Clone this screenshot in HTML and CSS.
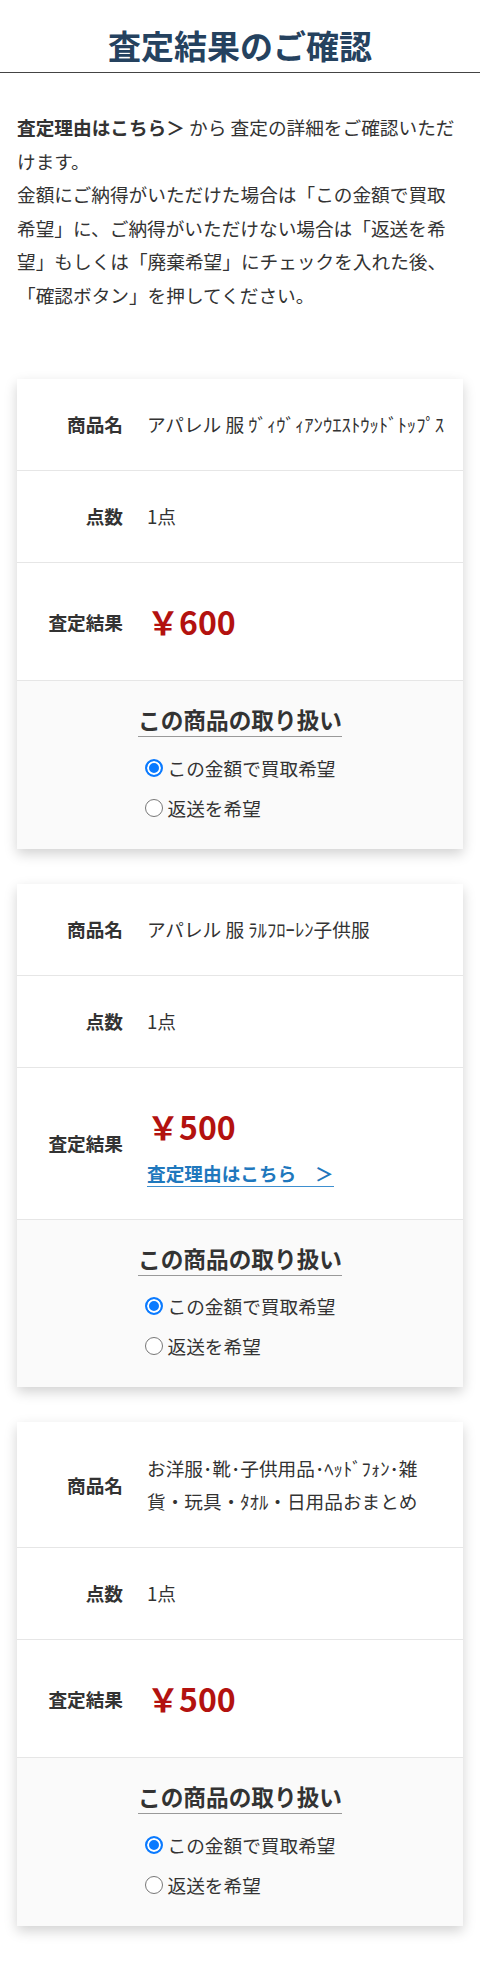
FILE: index.html
```html
<!DOCTYPE html>
<html lang="ja">
<head>
  <meta charset="UTF-8" />
  <title>査定結果のご確認</title>
  <link rel="stylesheet" href="styles.css">
</head>
<body>

  <header>
    <h1>査定結果のご確認</h1>
  </header>

  <main>
    <p class="intro">
      <b>査定理由はこちら＞</b> から 査定の詳細をご確認いただけます。<br>
      金額にご納得がいただけた場合は「この金額で買取希望」に、ご納得がいただけない場合は「返送を希望」もしくは「廃棄希望」にチェックを入れた後、「確認ボタン」を押してください。
    </p>

    <div class="card">
      <div class="row">
        <div class="label">商品名</div>
        <div class="value">アパレル 服 ｳﾞｨｳﾞｨｱﾝｳｴｽﾄｳｯﾄﾞﾄｯﾌﾟｽ</div>
      </div>
      <div class="row">
        <div class="label">点数</div>
        <div class="value">1点</div>
      </div>
      <div class="row">
        <div class="label">査定結果</div>
        <div class="value">
          <div class="price">￥600</div>
        </div>
      </div>
      <div class="handling">
        <h2>この商品の取り扱い</h2>
        <div class="options">
          <label><input type="radio" name="item1" checked>この金額で買取希望</label>
          <label><input type="radio" name="item1">返送を希望</label>
        </div>
      </div>
    </div>

    <div class="card">
      <div class="row">
        <div class="label">商品名</div>
        <div class="value">アパレル 服 ﾗﾙﾌﾛｰﾚﾝ子供服</div>
      </div>
      <div class="row">
        <div class="label">点数</div>
        <div class="value">1点</div>
      </div>
      <div class="row">
        <div class="label">査定結果</div>
        <div class="value">
          <div class="price">￥500</div>
          <div><a class="reason" href="#">査定理由はこちら　＞</a></div>
        </div>
      </div>
      <div class="handling">
        <h2>この商品の取り扱い</h2>
        <div class="options">
          <label><input type="radio" name="item2" checked>この金額で買取希望</label>
          <label><input type="radio" name="item2">返送を希望</label>
        </div>
      </div>
    </div>

    <div class="card">
      <div class="row">
        <div class="label">商品名</div>
        <div class="value">お洋服･靴･子供用品･ﾍｯﾄﾞﾌｫﾝ･雑貨・玩具・ﾀｵﾙ・日用品おまとめ</div>
      </div>
      <div class="row">
        <div class="label">点数</div>
        <div class="value">1点</div>
      </div>
      <div class="row">
        <div class="label">査定結果</div>
        <div class="value">
          <div class="price">￥500</div>
        </div>
      </div>
      <div class="handling">
        <h2>この商品の取り扱い</h2>
        <div class="options">
          <label><input type="radio" name="item3" checked>この金額で買取希望</label>
          <label><input type="radio" name="item3">返送を希望</label>
        </div>
      </div>
    </div>
  </main>

</body>
</html>
```

FILE: styles.css
```css
body {
  margin: 0;
  background: #fff;
  color: #333;
  font-family: 'Noto Sans CJK JP', 'Noto Sans', sans-serif;
  font-size: 18.67px;
  line-height: 1.8;
}

header {
  padding-top: 18px;
  border-bottom: 1px solid #444;
}

h1 {
  margin: 0;
  font-size: 33px;
  line-height: 54px;
  text-align: center;
  color: #25425f;
}

main {
  padding: 37px 17px 43px;
}

.intro {
  margin: 0 0 67px;
}

.card {
  background: #fff;
  box-shadow: 0 5px 12px rgba(0,0,0,0.18);
  margin-bottom: 35px;
}

.card:last-child {
  margin-bottom: 0;
}

.row {
  display: flex;
  align-items: center;
  padding: 28.7px 0;
  border-bottom: 1px solid #e6e6e6;
}

.label {
  flex: 0 0 106px;
  text-align: right;
  font-weight: bold;
}

.value {
  flex: 1;
  margin-left: 24px;
  padding-right: 14px;
}

.price {
  font-size: 32px;
  line-height: 60px;
  font-weight: bold;
  color: #b3120f;
}

.reason {
  color: #1f78bd;
  font-weight: bold;
  text-decoration: none;
  border-bottom: 1px solid #3d8fd0;
}

.handling {
  background: #fafafa;
  text-align: center;
  padding: 22px 0 21px;
}

.handling h2 {
  display: inline-block;
  margin: 0;
  font-size: 22.67px;
  line-height: 33px;
  border-bottom: 1px solid #999;
}

.options {
  display: flex;
  flex-direction: column;
  width: max-content;
  margin: 10px auto 0;
  text-align: left;
}

.options label {
  display: flex;
  align-items: center;
  height: 40px;
}

.options input {
  appearance: none;
  width: 18px;
  height: 18px;
  margin: 0 5px 0 0;
  border: 1px solid #777;
  border-radius: 50%;
  background: #fff;
}

.options input:checked {
  border: 2px solid #0a7aff;
  background: #0a7aff;
  box-shadow: inset 0 0 0 2px #fff;
}
```
